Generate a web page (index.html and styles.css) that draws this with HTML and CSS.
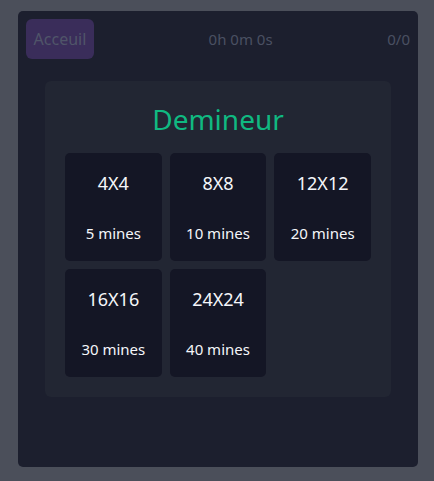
FILE: index.html
```html
<!DOCTYPE html>
<html lang="fr">
<head>
<meta charset="utf-8">
<title>Demineur</title>
<link rel="stylesheet" href="styles.css">
</head>
<body>
<main class="panel">
  <header class="topbar">
    <button class="home-btn" disabled>Acceuil</button>
    <span class="timer">0h 0m 0s</span>
    <span class="score">0/0</span>
  </header>
  <section class="card">
    <h1 class="title">Demineur</h1>
    <div class="grid">
      <div class="level"><span class="size">4X4</span><span class="mines">5 mines</span></div>
      <div class="level"><span class="size">8X8</span><span class="mines">10 mines</span></div>
      <div class="level"><span class="size">12X12</span><span class="mines">20 mines</span></div>
      <div class="level"><span class="size">16X16</span><span class="mines">30 mines</span></div>
      <div class="level"><span class="size">24X24</span><span class="mines">40 mines</span></div>
    </div>
  </section>
</main>
</body>
</html>
```
FILE: styles.css
```css
* { box-sizing: border-box; }
html, body { margin: 0; padding: 0; }
body {
  background: #4b4f5a;
  font-family: "Noto Sans", "Open Sans", sans-serif;
  padding: 11px 16px 14px 18px;
}
.panel {
  width: 400px;
  height: 456px;
  background: #1c1f2e;
  border-radius: 5px;
  padding: 8px;
}
.topbar {
  display: flex;
  justify-content: space-between;
  align-items: center;
  height: 40px;
}
.home-btn {
  height: 40px;
  width: 68px;
  border: none;
  border-radius: 6px;
  background: #3a2d5a;
  color: #505569;
  font-family: inherit;
  font-size: 16px;
  padding: 0;
}
.timer, .score {
  color: #4a5062;
  font-size: 15px;
}
.card {
  width: 346px;
  margin: 22px auto 0;
  background: #222633;
  border-radius: 6px;
  padding: 20px;
}
.title {
  margin: 0 0 16px;
  text-align: center;
  font-weight: 400;
  font-size: 28px;
  line-height: 36px;
  color: #10b981;
}
.grid {
  display: grid;
  grid-template-columns: repeat(3, 1fr);
  gap: 8px;
}
.level {
  height: 108px;
  background: #141625;
  border-radius: 5px;
  display: flex;
  flex-direction: column;
  align-items: center;
  justify-content: space-between;
  padding: 16px 0 18px;
  color: #f5f6fa;
}
.size { font-size: 18px; line-height: 28px; }
.mines { font-size: 15px; line-height: 20px; }
```
